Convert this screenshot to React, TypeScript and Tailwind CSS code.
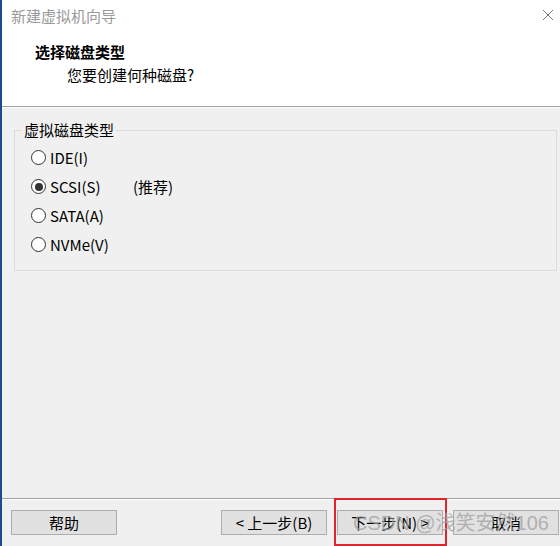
const font = { fontFamily: '"Noto Sans CJK SC", "Microsoft YaHei", sans-serif' };

const options = [
  { label: "IDE(I)", checked: false },
  { label: "SCSI(S)", checked: true, note: "(推荐)" },
  { label: "SATA(A)", checked: false },
  { label: "NVMe(V)", checked: false },
];

function Radio({ checked }: { checked: boolean }) {
  return (
    <span className="flex h-[15px] w-[15px] items-center justify-center rounded-full border border-[#333] bg-white">
      {checked && <span className="h-[8px] w-[8px] rounded-full bg-[#333]" />}
    </span>
  );
}

function Btn({ children }: { children: React.ReactNode }) {
  return (
    <button className="flex h-[25px] w-[106px] items-center justify-center border border-[#adadad] bg-[#e1e1e1] text-[15px] leading-none text-black">
      {children}
    </button>
  );
}

export default function App() {
  return (
    <div
      className="relative flex h-[546px] w-[560px] flex-col overflow-hidden border-l-2 border-[#1b4b8f] bg-white text-black"
      style={font}
    >
      {/* title bar */}
      <div className="flex h-[30px] items-center justify-between pl-[9px] pr-[6px]">
        <span className="text-[15px] leading-none text-[#9a9a9a]">新建虚拟机向导</span>
        <svg width="12" height="12" viewBox="0 0 12 12" className="text-[#777]">
          <path d="M1 1 L11 11 M11 1 L1 11" stroke="currentColor" strokeWidth="1" />
        </svg>
      </div>

      {/* header */}
      <div className="flex h-[76px] flex-col pt-[12px]">
        <div className="pl-[33px] text-[15px] font-bold leading-[20px]">选择磁盘类型</div>
        <div className="mt-[3px] pl-[65px] text-[15px] leading-[20px]">您要创建何种磁盘?</div>
      </div>
      <div className="h-px bg-[#a0a0a0]" />
      <div className="h-px bg-white" />

      {/* body */}
      <div className="flex-1 bg-[#f0f0f0] pt-[12px] pl-[12px] pr-[3px]">
        <fieldset className="border border-[#dcdcdc] pb-[11px] pt-[3px]">
          <legend className="ml-[7px] px-[2px] text-[15px] leading-[20px]">虚拟磁盘类型</legend>
          {options.map((o) => (
            <div key={o.label} className="flex h-[29px] items-center pl-[16px]">
              <Radio checked={o.checked} />
              <span className="ml-[4px] w-[83px] text-[15px] leading-none">{o.label}</span>
              {o.note && <span className="text-[15px] leading-none">{o.note}</span>}
            </div>
          ))}
        </fieldset>
      </div>

      {/* footer */}
      <div className="h-px bg-[#a0a0a0]" />
      <div className="h-px bg-white" />
      <div className="flex h-[46px] justify-between bg-[#f0f0f0] pl-[9px] pr-[1px] pt-[10px]">
        <Btn>帮助</Btn>
        <div className="flex gap-[10px]">
          <Btn>&lt; 上一步(B)</Btn>
          <Btn>下一步(N) &gt;</Btn>
          <Btn>取消</Btn>
        </div>
      </div>

      {/* annotation overlay */}
      <div className="pointer-events-none absolute left-[332px] top-[498px] h-[48px] w-[113px] border-2 border-[#e3222b]" />
      <div
        className="pointer-events-none absolute left-[351px] top-[510px] whitespace-nowrap text-[20px] leading-[26px] text-[#a0a0a0]/75"
        style={{ fontFamily: '"Liberation Sans", "Noto Sans CJK SC", sans-serif' }}
      >
        CSDN @浅笑安然106
      </div>
    </div>
  );
}
